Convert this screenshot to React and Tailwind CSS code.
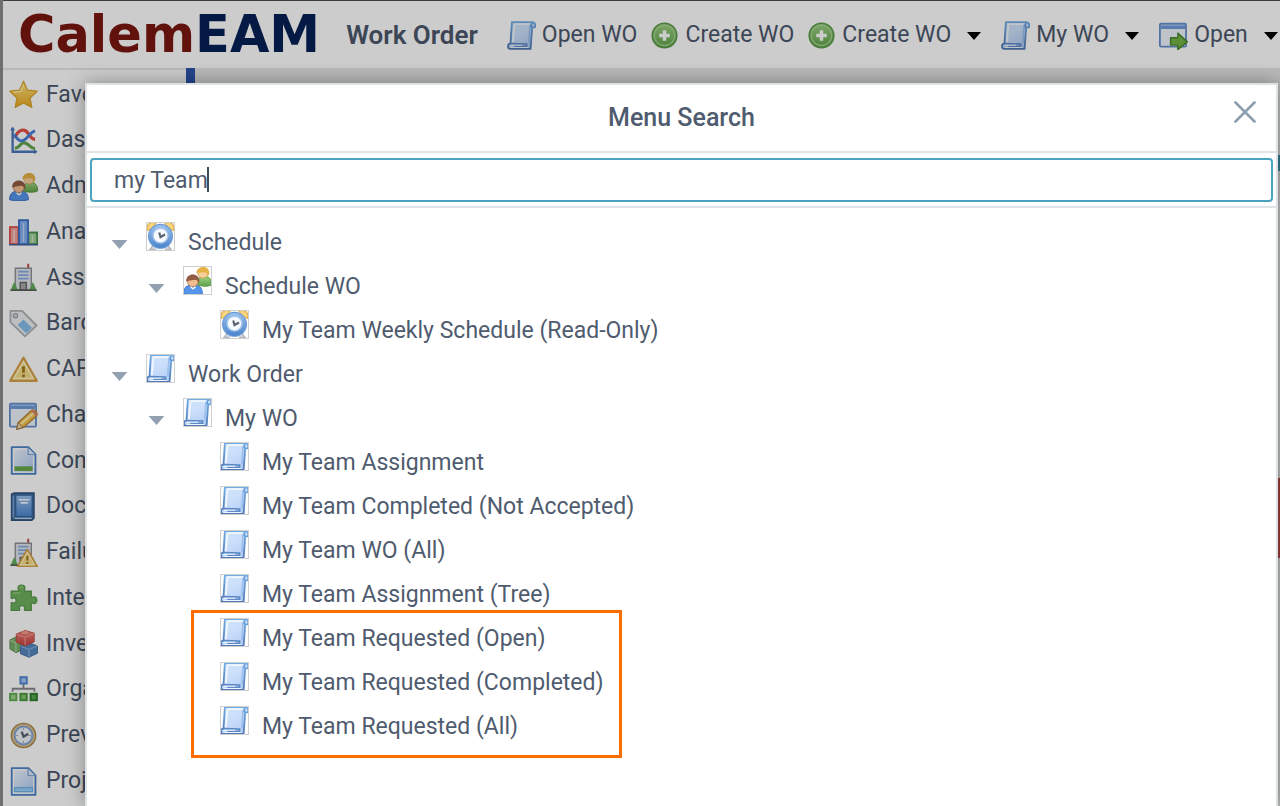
import React from 'react';

const Defs = () => (
  <svg width="0" height="0" className="absolute" aria-hidden="true">
    <defs>
      <linearGradient id="paper" x1="0" y1="0" x2="1" y2="1">
        <stop offset="0" stopColor="#f4f8ff" />
        <stop offset="1" stopColor="#a9c8f3" />
      </linearGradient>
      <linearGradient id="scroll" x1="0" y1="0" x2=".6" y2="1">
        <stop offset="0" stopColor="#d3e5fb" />
        <stop offset=".5" stopColor="#cbdffb" />
        <stop offset="1" stopColor="#b4cff5" />
      </linearGradient>
      <linearGradient id="scrollEdge" x1="0" y1="0" x2="0" y2="1">
        <stop offset="0" stopColor="#74aee6" />
        <stop offset="1" stopColor="#5078b4" />
      </linearGradient>
      <linearGradient id="gold" x1="0" y1="0" x2="0" y2="1">
        <stop offset="0" stopColor="#ffe680" />
        <stop offset="1" stopColor="#e8a71f" />
      </linearGradient>
      <linearGradient id="green" x1="0" y1="0" x2="0" y2="1">
        <stop offset="0" stopColor="#9fd283" />
        <stop offset="1" stopColor="#5da149" />
      </linearGradient>
      <linearGradient id="blue" x1="0" y1="0" x2="0" y2="1">
        <stop offset="0" stopColor="#9dc2ee" />
        <stop offset="1" stopColor="#4a84cc" />
      </linearGradient>
      <linearGradient id="red" x1="0" y1="0" x2="0" y2="1">
        <stop offset="0" stopColor="#f08a80" />
        <stop offset="1" stopColor="#c43c38" />
      </linearGradient>
    </defs>
  </svg>
);

const Icon = ({ children }) => (
  <svg viewBox="0 0 16 16" className="block h-full w-full" aria-hidden="true">{children}</svg>
);

const ScrollIcon = () => (
  <Icon>
    <path d="M2.7.6h11.2c1.4 0 2 1.1 1.5 2.9h-1.5L13 15.4H1.7c-1.5 0-1.5-2.8 0-2.9h.2z" fill="url(#scroll)" stroke="url(#scrollEdge)" strokeWidth="1" strokeLinejoin="round" />
    <path d="M4.1 1.6 3.2 11.8M4.4 1.7h8" fill="none" stroke="#f1f7ff" strokeWidth="1" />
    <path d="M12.8 2.2 12 12.4" stroke="#9dc0ee" strokeWidth="1" />
    <path d="M13.9 3.4c-1-.4-.8-1.8.3-2" fill="none" stroke="#5d95d6" strokeWidth=".8" />
    <path d="M1.9 12.5 10.8 12.7v1.2H4" fill="none" stroke="#5d88c6" strokeWidth=".9" />
    <path d="M2 13.4h6.4M2 14.6h9.5" stroke="#eef5ff" strokeWidth=".6" />
  </Icon>
);

const PlusIcon = () => (
  <Icon>
    <circle cx="8" cy="8" r="6.8" fill="url(#green)" stroke="#5a9a48" strokeWidth=".8" />
    <circle cx="8" cy="8" r="5.6" fill="none" stroke="#a9d596" strokeWidth=".6" />
    <path d="M8 5.1v5.8M5.1 8h5.8" stroke="#fff" strokeWidth="1.9" />
  </Icon>
);

const Window = () => (
  <>
    <rect x=".5" y="1.5" width="14.4" height="12.6" rx=".6" fill="#eef4fd" stroke="#6590cc" />
    <rect x="1" y="2" width="13.4" height="2.4" fill="#6f9bdb" />
    <path d="M1.2 2.4h13" stroke="#a4c4ee" strokeWidth=".6" />
  </>
);

const OpenIcon = () => (
  <Icon>
    <Window />
    <path d="M6.4 9.2h4V6.7l5.2 4.8-5.2 4.3v-2.5h-4z" fill="#74b347" stroke="#4a8a2e" strokeWidth=".8" strokeLinejoin="round" />
  </Icon>
);

const StarIcon = () => (
  <Icon>
    <path d="m8 .7 2.2 4.9 5.3.6-3.9 3.7 1 5.3L8 12.7l-4.6 2.5 1-5.3L.5 6.2l5.3-.6z" fill="url(#gold)" stroke="#dba62c" strokeWidth=".7" strokeLinejoin="round" />
    <path d="m8 2.7-1.5 3.6-4 .5" fill="none" stroke="#fff1ac" strokeWidth=".7" />
  </Icon>
);

const ChartIcon = () => (
  <Icon>
    <path d="M2 1v13.2H15" fill="none" stroke="#4a78bb" strokeWidth="1.3" />
    <path d="M1 2.4 2 1l1 1.4M13.8 13.2l1.4 1-1.4 1" fill="none" stroke="#4a78bb" strokeWidth=".7" />
    <path d="M3.2 12.3c3-.3 3-3.4 5.4-3 2.4.3 3 3.1 5.8 3.3" fill="none" stroke="#62a651" strokeWidth="1.7" />
    <path d="M3.2 6.6c2-5 5.5-5.5 7.5-2.4 1.1 1.9 2 3.1 3.7 3.2" fill="none" stroke="#e3504b" strokeWidth="1.8" />
    <path d="M2.8 4.6c2.6 4.6 5 4.2 6.8 2.2C11.200 5 12.400 3.200 14.400 2.700" fill="none" stroke="#4582d9" strokeWidth="1.6" />
  </Icon>
);

const UsersIcon = () => (
  <Icon>
    <path d="M8 10.5c-.2-3.300 1-4.700 3.800-4.700s4 1.400 4 4.700c-2 .9-5.200.9-7.800 0z" fill="url(#green)" stroke="#5a9a3c" strokeWidth=".5" />
    <circle cx="11" cy="3.800" r="2.900" fill="#f7cf9b" stroke="#c99a50" strokeWidth=".4" />
    <path d="M7.400 3.900C7.200.2 14.200-1.200 14.500 3.700c0 1-.5 1.800-.9 2-.1-1.100-.4-1.800-1.300-2.200-1.600.3-3.300 0-4.900.4z" fill="#e5b145" />
    <path d="M.3 15.300c0-3.400 1.600-4.800 5.200-4.800s5.200 1.400 5.200 4.800c-3 .9-7.400.9-10.400 0z" fill="#5595ea" stroke="#3a70c4" strokeWidth=".5" />
    <circle cx="5.400" cy="8.300" r="3.100" fill="#f3bd90" stroke="#a3704c" strokeWidth=".4" />
    <path d="M1.800 8.600C1.300 3.700 9 3.100 9.100 8.400l-.6 1.200c-.3-1.100-.6-1.700-1.300-2-1.700.4-3.200.1-5.400 1z" fill="#935b42" />
    <path d="m4.200 11.400 1.300 1.200 1.400-1.200" fill="none" stroke="#fff" strokeWidth=".7" />
  </Icon>
);

const BarsIcon = () => (
  <Icon>
    <rect x=".5" y="5" width="4.700" height="9.500" fill="#f0a39d" stroke="#dd524e" />
    <rect x="10.700" y="8" width="4.800" height="6.500" fill="#9fce95" stroke="#4b934e" />
    <rect x="5.500" y="1.200" width="5" height="13.300" fill="#80aeee" stroke="#3e6fc5" />
    <path d="M2.800 6.500v6.700M8 2.700v10.500M13 9.500v3.800" stroke="#fff" strokeOpacity=".5" strokeWidth=".8" />
    <path d="M0 14.700h16" stroke="#3b5e9d" strokeWidth=".8" />
  </Icon>
);

const Building = () => (
  <>
    <path d="M10.600 3V.4" stroke="#c24f4c" strokeWidth="1.100" />
    <path d="M3.500 2.900h8.800v12H3.500z" fill="#e2e5ea" stroke="#909399" strokeWidth=".8" />
    <path d="M5 4.800h5.800M5 6.700h5.800M5 8.600h5.800" stroke="#86ace4" strokeWidth="1" />
    <path d="M6.200 10.800h3.400v4H6.200z" fill="#a9a9a9" stroke="#66686b" strokeWidth=".8" />
    <path d="M.9 15l1.900-4.500L5 15zM11 15l2.200-4.500 2 4.500z" fill="#5fae58" />
    <path d="M.8 15h14.400" stroke="#5b605c" strokeWidth=".9" />
  </>
);

const WarnTriangle = () => (
  <>
    <path d="M8 1.500 15.300 14.200H.7z" fill="#f5dc88" stroke="#d6a148" strokeWidth="1.300" strokeLinejoin="round" />
    <path d="M8 3.600 13.400 13H2.600z" fill="none" stroke="#fff3c2" strokeWidth=".8" />
    <path d="M8 6.200v3.600M8 10.800v1.500" stroke="#a07a22" strokeWidth="1.500" />
  </>
);

const AssetIcon = () => <Icon><Building /></Icon>;

const TagIcon = () => (
  <Icon>
    <path d="M.8 1h6.400l8 8.100-6.400 6L.8 7.200z" fill="#eceef0" stroke="#b0b3b6" strokeWidth="1" strokeLinejoin="round" />
    <path d="m8 5.800 4.700 4.600-3.200 3-4.800-4.600z" fill="#86bdec" />
    <circle cx="3.600" cy="3.700" r="1.200" fill="#d4d6d8" stroke="#9a9da0" strokeWidth=".6" />
  </Icon>
);

const WarningIcon = () => <Icon><WarnTriangle /></Icon>;

const EditIcon = () => (
  <Icon>
    <Window />
    <path d="m5 12 7.500-6.900c1.700-.7 3.600 1.400 2.800 3L8 14.600l-3.700 1z" fill="#f3c04d" stroke="#b5833a" strokeWidth=".7" strokeLinejoin="round" />
    <path d="m6.600 12.700 7.200-6.200" stroke="#fff0a8" strokeWidth="1.200" />
    <path d="m5 12 2.900 2.600-3.700 1z" fill="#f2d5ac" stroke="#8a6234" strokeWidth=".4" />
    <path d="m12.500 5 2.900 3" stroke="#d77c70" strokeWidth="1" />
  </Icon>
);

const PageIcon = ({ bar }) => (
  <Icon>
    <path d="M1.500.6h9.200l3.900 4v10.800H1.500z" fill="url(#paper)" stroke="#4f84c6" strokeLinejoin="round" />
    <path d="M2.500 1.600h7.600v3.500h3.500v9.300H2.500z" fill="none" stroke="#fff" strokeWidth=".6" />
    <path d="M10.500.8v4h4" fill="#dce9fb" stroke="#6894cc" strokeWidth=".6" />
    {bar === 'green'
      ? <rect x="3" y="11.200" width="10" height="2.600" fill="#6aa84a" />
      : <rect x="3" y="11.400" width="10" height="2.200" fill="#9bd0f5" stroke="#66aee8" strokeWidth=".6" />}
  </Icon>
);

const BookIcon = () => (
  <Icon>
    <path d="M1.400 1.200 2.800.5h11v13.900l-1.200 1.200H1.400z" fill="#3f6a9c" stroke="#31567f" strokeWidth=".8" />
    <path d="M3.800 1.800h8.900v11.800H3.800z" fill="url(#blue)" stroke="#2f6299" strokeWidth=".5" />
    <path d="M2.400 2v12" stroke="#7aa6d8" strokeWidth=".8" />
    <path d="M5.400 4.300h5.800M6.400 6h4" stroke="#f4f8ff" strokeWidth=".9" />
    <path d="M3 14.500h9.500" stroke="#dfe9f5" strokeWidth=".6" />
  </Icon>
);

const FailureIcon = () => (
  <Icon>
    <Building />
    <g transform="translate(4.200 5.200) scale(.74)"><WarnTriangle /></g>
  </Icon>
);

const PuzzleIcon = () => (
  <Icon>
    <path d="M1.200 4h4c.5-.5-.3-1.200-.2-2C5.200.2 8.600.2 8.800 2c.1.8-.7 1.500-.2 2h3.700v3.300c.6.400 1-.3 1.700-.2 1.800.2 1.800 3.500 0 3.700-.7.1-1.100-.6-1.700-.2v4H8.600c-.5-.6.2-1 .1-1.600-.3-1.400-2.800-1.400-3 0-.1.600.5 1 .1 1.600H1.200v-4.200c.6-.4 1 .3 1.700.2 1.400-.3 1.400-2.800 0-3-.7-.1-1.100.6-1.700.2z" fill="#70b15e" stroke="#579b4b" strokeWidth=".7" />
    <path d="M2.200 5h4M6 2.200C6.300 1.300 7.500 1.400 7.800 2" fill="none" stroke="#a6d596" strokeWidth=".6" />
  </Icon>
);

const CubesIcon = () => (
  <Icon>
    <path d="m.5 6 4-1.800 3 1.600v5.500l-3.600 1.800L.5 11z" fill="#7ab06c" stroke="#5b8f53" strokeWidth=".5" />
    <path d="m.8 6.200 3 1.500 3.500-1.600M3.800 7.700v5" fill="none" stroke="#b4d6aa" strokeWidth=".6" />
    <path d="m6.300 9.300 4.700-1.800 4.700 1.900v4L11 15.600l-4.700-2z" fill="#5587bf" stroke="#416f9f" strokeWidth=".5" />
    <path d="m6.500 9.500 4.500 1.800 4.500-1.800M11 11.300v4" fill="none" stroke="#8fb4de" strokeWidth=".6" />
    <path d="m4 2.800 4.900-2 5 1.500v4.800L9 9.300 4 7.300z" fill="url(#red)" stroke="#b94844" strokeWidth=".5" />
    <path d="m4.200 3 4.700 1.500 4.800-2M8.900 4.500v4.400" fill="none" stroke="#f0978f" strokeWidth=".6" />
    <ellipse cx="8.900" cy="1.900" rx="1.800" ry=".9" fill="#f29a92" />
  </Icon>
);

const OrgIcon = () => (
  <Icon>
    <path d="M8 5v2.600M2 9.300V7.600h12v1.700" fill="none" stroke="#85898f" strokeWidth="1" />
    <rect x="6.300" y="1.200" width="3.500" height="3.500" fill="#a5c6f6" stroke="#5488d6" strokeWidth="1.100" />
    <rect x=".6" y="10.400" width="3.500" height="3.500" fill="#9fd58f" stroke="#62ad51" strokeWidth="1.100" />
    <rect x="6.300" y="10.400" width="3.500" height="3.500" fill="#85c573" stroke="#4b993f" strokeWidth="1.100" />
    <rect x="11.900" y="10.400" width="3.500" height="3.500" fill="#5aa64e" stroke="#2f7f2d" strokeWidth="1.100" />
  </Icon>
);

const ClockIcon = () => (
  <Icon>
    <circle cx="8" cy="8" r="6.700" fill="#dcc38d" stroke="#a98850" strokeWidth=".8" />
    <circle cx="8" cy="8" r="4.900" fill="#eff4fb" stroke="#86a5d3" strokeWidth="1.100" />
    <path d="M7 5.900 8 8.600l2.700-1.500" fill="none" stroke="#5a6470" strokeWidth="1.300" />
    <path d="M8 4v.8M8 11.200v.8M4 8h.8M11.200 8h.8" stroke="#8a97a8" strokeWidth=".6" />
  </Icon>
);

const AlarmIcon = () => (
  <Icon>
    <path d="m3.900 13-1.700 2.200h3.400M12.100 13l1.700 2.200h-3.400" fill="#d9dce0" stroke="#b3b8be" strokeWidth=".8" />
    <path d="M.8 4.700C-.2 1.400 2.400-.6 5.600.6L4 3.300zM15.200 4.700c1-3.300-1.600-5.300-4.800-4.100L12 3.300z" fill="#f9d47a" stroke="#e0ae4c" strokeWidth=".6" />
    <circle cx="8" cy="7.900" r="6.600" fill="url(#blue)" stroke="#6b9ad4" strokeWidth=".6" />
    <circle cx="8" cy="7.500" r="4.100" fill="#f7fbff" stroke="#a9c7ec" strokeWidth=".8" />
    <path d="m7.300 5.800.7 2.500 2.500-1.400" fill="none" stroke="#5a6470" strokeWidth="1.200" />
  </Icon>
);

const Caret = ({ className }) => (
  <svg viewBox="0 0 14 8" className={className} aria-hidden="true">
    <path d="M0 0h14L7 8z" fill="currentColor" />
  </svg>
);

const toolbar = [
  { label: 'Open WO', icon: <ScrollIcon /> },
  { label: 'Create WO', icon: <PlusIcon /> },
  { label: 'Create WO', icon: <PlusIcon />, menu: true },
  { label: 'My WO', icon: <ScrollIcon />, menu: true },
  { label: 'Open', icon: <OpenIcon />, menu: true },
];

const sections = [
  { label: 'Favorites', icon: <StarIcon /> },
  { label: 'Dashboard', icon: <ChartIcon /> },
  { label: 'Admin', icon: <UsersIcon /> },
  { label: 'Analysis', icon: <BarsIcon /> },
  { label: 'Asset', icon: <AssetIcon /> },
  { label: 'Barcode', icon: <TagIcon /> },
  { label: 'CAPA', icon: <WarningIcon /> },
  { label: 'Change', icon: <EditIcon /> },
  { label: 'Contract', icon: <PageIcon bar="green" /> },
  { label: 'Document', icon: <BookIcon /> },
  { label: 'Failure', icon: <FailureIcon /> },
  { label: 'Integration', icon: <PuzzleIcon /> },
  { label: 'Inventory', icon: <CubesIcon /> },
  { label: 'Organization', icon: <OrgIcon /> },
  { label: 'Preventive', icon: <ClockIcon /> },
  { label: 'Project', icon: <PageIcon bar="blue" /> },
];

const Header = () => (
  <header className="flex h-[68px] shrink-0 items-center overflow-hidden border-t border-[#4d4d55] bg-white pt-0.5 pl-[15px] whitespace-nowrap">
    <a href="#home" className="flex pb-0.5 font-['DejaVu_Sans',sans-serif] text-[51px] leading-[64px] font-bold">
      <span className="text-[#7a1710]">Calem</span>
      <span className="text-[#062056]">EAM</span>
    </a>
    <h1 className="ml-[26px] text-[26px] font-semibold">Work Order</h1>
    <nav className="ml-[29px] flex items-center gap-[13px]">
      {toolbar.map((item, i) => (
        <button key={i} type="button" className="flex items-center gap-[6px]">
          <span className="size-[29px]">{item.icon}</span>
          {item.label}
          {item.menu && <Caret className="mr-[7px] ml-[10px] h-2 w-[14px] text-black" />}
        </button>
      ))}
    </nav>
  </header>
);

const Sidebar = () => (
  <nav className="flex w-[183px] shrink-0 flex-col border-t-2 border-[#e8e8e8] bg-white pt-0.5 pb-0.5">
    {sections.map((s) => (
      <a key={s.label} href="#section" className="flex flex-1 items-center gap-2 pl-[6px]">
        <span className="size-[29px]">{s.icon}</span>
        {s.label}
      </a>
    ))}
  </nav>
);

const Row = ({ label, icon, open, children }) => (
  <li>
    <div className="flex h-11">
      {open ? (
        <button type="button" aria-label={`Collapse ${label}`} className="w-[35px] text-[#93a0b2]">
          <Caret className="h-[9px] w-[17px]" />
        </button>
      ) : (
        <span className="w-[35px]" />
      )}
      <span className="size-[29px] outline-1 -outline-offset-1 outline-[#cfcfcf]">{icon}</span>
      <a href="#menu" className="ml-[13px] leading-[42px]">{label}</a>
    </div>
    {open && <ul className="pl-[37px]">{children}</ul>}
  </li>
);

const MenuTree = () => (
  <ul className="pt-[14px] pl-6">
    <Row label="Schedule" icon={<AlarmIcon />} open>
      <Row label="Schedule WO" icon={<UsersIcon />} open>
        <Row label="My Team Weekly Schedule (Read-Only)" icon={<AlarmIcon />} />
      </Row>
    </Row>
    <Row label="Work Order" icon={<ScrollIcon />} open>
      <Row label="My WO" icon={<ScrollIcon />} open>
        <Row label="My Team Assignment" icon={<ScrollIcon />} />
        <Row label="My Team Completed (Not Accepted)" icon={<ScrollIcon />} />
        <Row label="My Team WO (All)" icon={<ScrollIcon />} />
        <Row label="My Team Assignment (Tree)" icon={<ScrollIcon />} />
        <li className="relative">
          <ul>
            <Row label="My Team Requested (Open)" icon={<ScrollIcon />} />
            <Row label="My Team Requested (Completed)" icon={<ScrollIcon />} />
            <Row label="My Team Requested (All)" icon={<ScrollIcon />} />
          </ul>
          <span className="pointer-events-none absolute -top-2 -bottom-2 left-[6px] w-[431px] border-3 border-[#ff6d00]" />
        </li>
      </Row>
    </Row>
  </ul>
);

const SearchDialog = () => (
  <div
    role="dialog"
    aria-labelledby="search-title"
    className="absolute top-[83px] right-0.5 bottom-0 left-[85px] border-2 border-b-0 border-[#dde2e5] bg-white text-[#4f5b6e] shadow-[0_0_18px_rgba(0,0,0,0.35)]"
  >
    <div className="relative flex h-[68px] items-center justify-center border-b-2 border-[#e1e4e6]">
      <h2 id="search-title" className="text-[25px] font-medium">Menu Search</h2>
      <button type="button" aria-label="Close" className="absolute top-4 right-[20px] size-[22px] text-[#8f9db0]">
        <svg viewBox="0 0 22 22" className="size-full" aria-hidden="true">
          <path d="M1.500 1.500l19 19M20.500 1.500l-19 19" stroke="currentColor" strokeWidth="2.600" strokeLinecap="round" />
        </svg>
      </button>
    </div>
    <div className="relative border-b-2 border-[#dfe2e6] px-[3px] pt-[5px] pb-1">
      <input
        type="text"
        aria-label="Search menus"
        defaultValue="my Team"
        className="block h-11 w-full rounded border-2 border-[#4ba3c2] px-[22px] outline-none"
      />
      <span className="absolute top-[14px] left-[120px] h-[25px] w-0.5 bg-[#3f4a5c]" />
    </div>
    <MenuTree />
  </div>
);

export default function App() {
  return (
    <div className="relative flex h-screen overflow-hidden bg-[#a5a5a5] font-[Roboto,sans-serif] text-[23px] text-[#4b586c]">
      <Defs />
      <div className="flex min-w-0 flex-1 flex-col border-l-3 border-[#8a8a8a]">
        <Header />
        <div className="flex min-h-0 flex-1">
          <Sidebar />
          <div className="w-[9px] bg-[#2f56af]" />
          <main className="flex flex-1 flex-col items-end bg-[#e8e8e8] pt-[87px]">
            <div className="h-4 w-0.5 bg-[#3e94b5]" />
            <div className="mt-[307px] h-20 w-0.5 bg-[#c04a48]" />
          </main>
        </div>
      </div>
      <div className="absolute inset-0 bg-black/20" />
      <SearchDialog />
    </div>
  );
}
